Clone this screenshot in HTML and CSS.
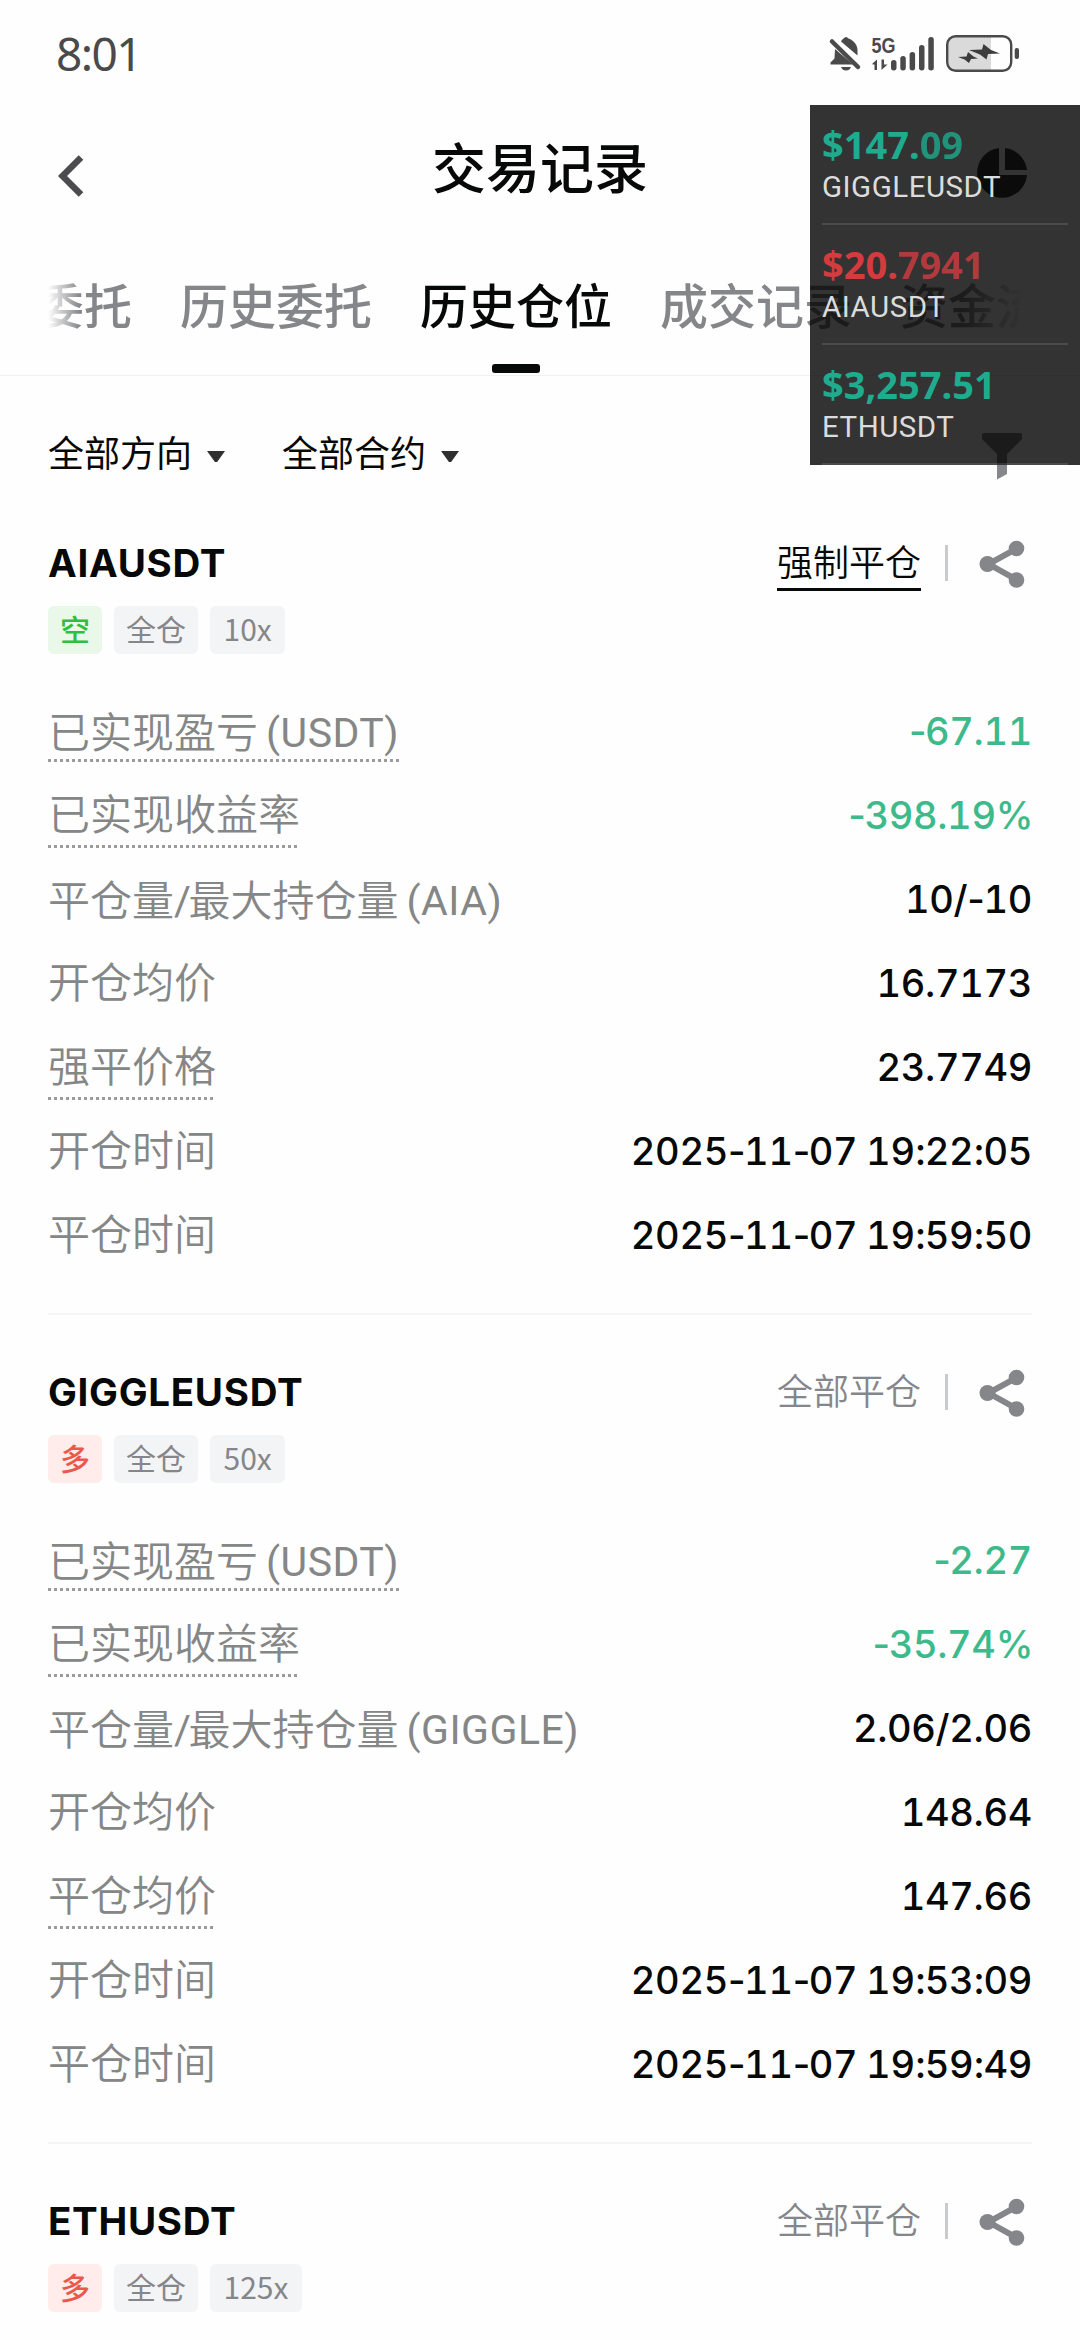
FILE: index.html
```html
<!DOCTYPE html>
<html lang="zh-CN">
<head>
<meta charset="utf-8">
<title>交易记录</title>
<link rel="stylesheet" href="styles.css">
</head>
<body>
<svg width="0" height="0" class="defs">
  <symbol id="share" viewBox="0 0 48 48">
    <path d="M38 8.500 9.500 24 38 40" fill="none" stroke="currentColor" stroke-width="6"/>
    <circle cx="37.500" cy="8.500" r="7.800" fill="currentColor"/>
    <circle cx="8.500" cy="24" r="8" fill="currentColor"/>
    <circle cx="37.500" cy="40" r="7.800" fill="currentColor"/>
  </symbol>
</svg>
<div class="screen">
  <div class="status">
    <span class="clock">8:01</span>
    <svg class="status-icons" width="194" height="44" viewBox="826 32 194 44">
      <g fill="#4a4a4a">
        <path d="M834 49 L852 64.500 H829.500 V62.500 L833.500 58.500Z"/>
        <path d="M840 41.500 C841 39.500 842 39 842.500 38.500 Q845 35.500 847.500 38.500 C853 40.500 856.500 45 856.500 50 V55.500Z"/>
        <path d="M840 67h10q-1.500 3.500-5 3.500t-5-3.500z"/>
        <path d="M831 41.500 857 67" stroke="#4a4a4a" stroke-width="4.500" stroke-linecap="round"/>
        <path d="M871.500 63.500 876 59.500V70H873.500V64.500H871.500ZM880.500 59.500H883V64.500H886.500L880.500 70Z"/>
        <rect x="890" y="60" width="5.500" height="10.500" rx="2.700"/>
        <rect x="899.300" y="56" width="5.500" height="14.500" rx="2.700"/>
        <rect x="908.600" y="52" width="5.500" height="18.500" rx="2.700"/>
        <rect x="918" y="45" width="5.500" height="25.500" rx="2.700"/>
        <rect x="927.300" y="37" width="5.500" height="33.500" rx="2.700"/>
      </g>
      <text x="870.500" y="53" class="net" textLength="24" lengthAdjust="spacingAndGlyphs">5G</text>
      <path d="M955 37H990V70H955Q947 70 947 62V45Q947 37 955 37Z" fill="#dadada"/>
      <rect x="946.200" y="36.200" width="64" height="34.600" rx="8.500" fill="none" stroke="#4a4a4a" stroke-width="2.400"/>
      <rect x="1013.700" y="48" width="4.300" height="11" rx="2" fill="#4a4a4a"/>
      <path d="M968 50 981 49.500 982.500 44 990 50 999 53.500 987 54 985.500 59.500 979 54.500Z" fill="#3c3c3c"/>
      <path d="M957 57 965.500 56.500 967 52 972.500 56.500 977 58.500 970 59 968 63 963.500 59.500Z" fill="#3c3c3c"/>
    </svg>
  </div>

  <header class="nav">
    <svg class="back" width="26" height="42" viewBox="0 0 26 42"><path d="M23 2.500 4.500 21 23 39.500" fill="none" stroke="#4c4c50" stroke-width="6.500"/></svg>
    <h1>交易记录</h1>
    <svg class="pie" width="50" height="50" viewBox="0 0 50 50" fill="#37373b"><path d="M22 0A25 25 0 1 0 50 27H22Z"/><path d="M28 0A25 25 0 0 1 50 22H28Z"/></svg>
  </header>

  <nav class="tabs">
    <span>当前委托</span><span>历史委托</span><span class="active">历史仓位</span><span>成交记录</span><span>资金流水</span>
  </nav>

  <div class="filters">
    <span>全部方向</span><i class="caret"></i>
    <span class="second">全部合约</span><i class="caret"></i>
    <svg class="funnel" width="42" height="47" viewBox="0 0 42 47"><path d="M1 2Q1 0 3 0H39Q41 0 41 2V6L26 21V41L16 46.500V21L1 6Z" fill="#86878a"/></svg>
  </div>

  <main>
    <section class="card">
      <div class="head">
        <h2>AIAUSDT</h2>
        <span class="kind forced">强制平仓</span><i class="bar"></i>
        <svg class="share" width="48" height="48"><use href="#share"/></svg>
      </div>
      <div class="tags"><span class="short">空</span><span>全仓</span><span class="lever">10x</span></div>
      <dl>
        <div><dt class="hint tight">已实现盈亏<b>(USDT)</b></dt><dd class="green"><i>-</i>67.11</dd></div>
        <div><dt class="hint">已实现收益率</dt><dd class="green"><i>-</i>398.19<i>%</i></dd></div>
        <div><dt class="mixed">平仓量<b class="slash">/</b>最大持仓量<b>(AIA)</b></dt><dd>10/<i>-</i>10</dd></div>
        <div><dt>开仓均价</dt><dd>16.7173</dd></div>
        <div><dt class="hint">强平价格</dt><dd>23.7749</dd></div>
        <div><dt>开仓时间</dt><dd>2025<i>-</i>11<i>-</i>07<i> </i>19<i>:</i>22<i>:</i>05</dd></div>
        <div><dt>平仓时间</dt><dd>2025<i>-</i>11<i>-</i>07<i> </i>19<i>:</i>59<i>:</i>50</dd></div>
      </dl>
    </section>
    <section class="card">
      <div class="head">
        <h2>GIGGLEUSDT</h2>
        <span class="kind">全部平仓</span><i class="bar"></i>
        <svg class="share" width="48" height="48"><use href="#share"/></svg>
      </div>
      <div class="tags"><span class="long">多</span><span>全仓</span><span class="lever">50x</span></div>
      <dl>
        <div><dt class="hint tight">已实现盈亏<b>(USDT)</b></dt><dd class="green"><i>-</i>2.27</dd></div>
        <div><dt class="hint">已实现收益率</dt><dd class="green"><i>-</i>35.74<i>%</i></dd></div>
        <div><dt class="mixed">平仓量<b class="slash">/</b>最大持仓量<b>(GIGGLE)</b></dt><dd>2.06/2.06</dd></div>
        <div><dt>开仓均价</dt><dd>148.64</dd></div>
        <div><dt class="hint">平仓均价</dt><dd>147.66</dd></div>
        <div><dt>开仓时间</dt><dd>2025<i>-</i>11<i>-</i>07<i> </i>19<i>:</i>53<i>:</i>09</dd></div>
        <div><dt>平仓时间</dt><dd>2025<i>-</i>11<i>-</i>07<i> </i>19<i>:</i>59<i>:</i>49</dd></div>
      </dl>
    </section>
    <section class="card">
      <div class="head">
        <h2>ETHUSDT</h2>
        <span class="kind">全部平仓</span><i class="bar"></i>
        <svg class="share" width="48" height="48"><use href="#share"/></svg>
      </div>
      <div class="tags"><span class="long">多</span><span>全仓</span><span class="lever">125x</span></div>
    </section>
  </main>

  <aside class="ticker">
    <div><strong class="up">$147.<em>09</em></strong><span>GIGGLEUSDT</span></div>
    <div><strong class="down">$20.<em>7941</em></strong><span>AIAUSDT</span></div>
    <div><strong class="up">$3,257.51</strong><span>ETHUSDT</span></div>
  </aside>
</div>
</body>
</html>
```
FILE: styles.css
```css
* { box-sizing: border-box; margin: 0; padding: 0; }
body { background: #fefefe; font-family: "Noto Sans CJK SC", sans-serif; color: #070808; }
.defs { display: block; height: 0; }
.screen { position: relative; width: 1080px; height: 2340px; overflow: hidden; background: #fefefe; }

.status { height: 105px; padding: 0 59px 0 56px; display: flex; justify-content: space-between; align-items: flex-start; }
.clock { font: 400 46px/64px "Noto Sans", sans-serif; color: #4a4a4a; padding-top: 21px; letter-spacing: -1.6px; }
.status-icons { margin-top: 32px; }
.net { font: 700 22px "Liberation Sans", sans-serif; fill: #4a4a4a; }

.nav { height: 135px; padding: 0 53px 0 58px; display: flex; justify-content: space-between; align-items: center; }
.nav .back { margin-top: 6px; }
.nav h1 { font-size: 54px; font-weight: 500; line-height: 78px; margin-right: -19px; margin-top: -14px; }

.tabs {
  height: 137px; margin: 0 48px; overflow: hidden; display: flex; gap: 48px;
  font-size: 48px; font-weight: 500; line-height: 126px; white-space: nowrap; color: #85868a;
  -webkit-mask-image: linear-gradient(90deg, transparent, #000 32px, #000 calc(100% - 70px), transparent calc(100% - 8px));
  mask-image: linear-gradient(90deg, transparent, #000 32px, #000 calc(100% - 70px), transparent calc(100% - 8px));
}
.tabs span { flex: none; height: 137px; }
.tabs span:first-child { margin-left: -108px; }
.tabs .active { color: #070808; display: flex; flex-direction: column; align-items: center; }
.tabs .active::after { content: ""; width: 48px; height: 9px; margin-top: -2px; border-radius: 3px; background: #070808; }

.filters { height: 127px; border-top: 1px solid #f1f1f2; margin-top: -2px; padding: 24px 57px 0 48px; display: flex; align-items: center; font-size: 36px; line-height: 52px; }
.caret { width: 18px; height: 11px; margin: 11px 0 0 15px; background: #303030; clip-path: polygon(0 0, 100% 0, 56% 100%, 44% 100%); }
.filters .second { margin-left: 57px; }
.funnel { margin-left: auto; margin-top: 10px; }

main { padding: 0 48px; margin-top: 24px; }
.card { height: 829px; }
.head { display: flex; align-items: center; height: 74px; }
.head h2 { font: 700 38.5px/48px Inter, "Liberation Sans", sans-serif; margin-right: auto; letter-spacing: 0.7px; }
.kind { font-size: 36px; line-height: 50px; color: #85868a; font-weight: 350; height: 56px; }
.kind.forced { color: #070808; border-bottom: 3px solid #070808; }
.bar { width: 3px; height: 36px; background: #c9cacb; margin: 0 31px 0 24px; }
.share { color: #85868a; margin: 2px 5px 0 0; }
.tags { display: flex; gap: 12px; margin-top: 6px; }
.tags span { height: 48px; border-radius: 6px; padding: 0 12px; background: #f3f4f6; color: #85868a; font: 400 30px/45px "Noto Sans CJK SC", sans-serif; }
.tags .lever { padding: 0 13.5px; }
.tags .short { background: #eaf8ea; color: #2fbf3d; font-weight: 500; }
.tags .long { background: #ffeceb; color: #e9594b; font-weight: 500; }
dl { padding: 35px 0 36px; border-bottom: 2px solid #f5f5f6; }
dl div { display: flex; justify-content: space-between; height: 84px; align-items: center; }
dt { font-size: 42px; line-height: 60px; color: #858686; font-weight: 350; height: 66px; display: flex; }
dt b { font: 400 41px/66px Roboto, sans-serif; padding-left: 8px; letter-spacing: 0.5px; }
dt .slash { padding-left: 0; margin-right: -3px; }
.mixed { padding-top: 2px; }
.hint { background: repeating-linear-gradient(90deg, #9a9b9b 0 3px, transparent 3px 6px) left bottom / 100% 3px no-repeat; }
.tight { height: 62px; }
dd { font: 500 38px/48px Inter, sans-serif; font-feature-settings: "tnum"; white-space: pre; letter-spacing: -0.35px; }
dd i { font-style: normal; font-feature-settings: normal; letter-spacing: -1.4px; }
.green { color: #3cba8b; }

.ticker { position: absolute; left: 810px; top: 105px; width: 270px; height: 360px; background: rgba(0, 0, 0, .8); padding: 0 12px; }
.ticker div { height: 120px; border-bottom: 2px solid rgba(255, 255, 255, .12); padding-top: 17px; display: flex; flex-direction: column; gap: 2px; }
.ticker strong { font: 700 38px/44px "Noto Sans", sans-serif; }
.ticker em { font-style: normal; opacity: .8; }
.ticker span { font: 400 29.5px/38px Roboto, sans-serif; color: #dcdcdc; letter-spacing: 0.5px; }
.up { color: #1fab8e; }
.down { color: #d33c3f; }
```
